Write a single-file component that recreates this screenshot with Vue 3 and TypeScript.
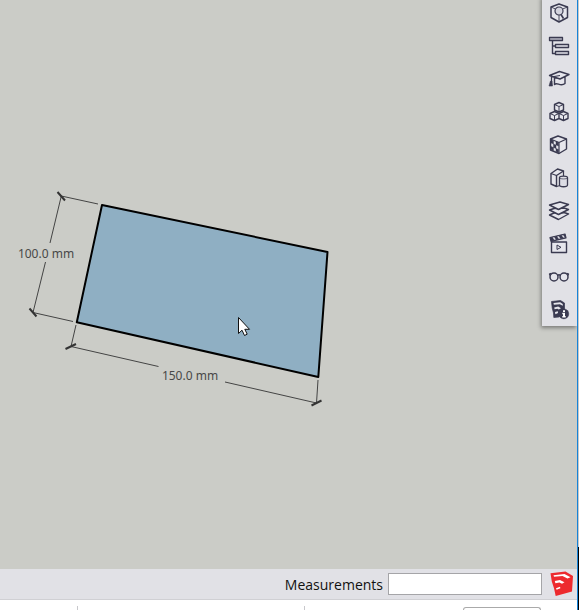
<script setup lang="ts">
import { ref } from 'vue'

interface Shape {
  d: string
  fill?: string
  width?: number
}

interface Tool {
  name: string
  shapes: Shape[]
}

const ink = '#3a3a50'
const pale = '#e6e6ec'
const measurement = ref('')

// Icon paths share a 22 x 22 grid.
const tools: Tool[] = [
  {
    name: 'Entity Info',
    shapes: [
      { d: 'M11 2 19.5 5V15.5L11 20 3 15.5V5Z', fill: pale, width: 1.5 },
      { d: 'M3 5 7.5 7M19.5 5 14.5 7M11 13V20', width: 0.9 },
      { d: 'M11 5A4 4 0 1 1 11 13A4 4 0 1 1 11 5Z', fill: '#d4d4de', width: 1.2 },
      { d: 'M13 12.5 15.5 16.5', width: 1.6 },
    ],
  },
  {
    name: 'Outliner',
    shapes: [
      { d: 'M1.5 2.5H14.5V5.5H1.5Z', fill: '#b9b9c5', width: 1.3 },
      { d: 'M4.5 6V18.5H8M4.5 11H8', width: 1.4 },
      { d: 'M7.5 9.5H20.5V12.5H7.5ZM7.5 16.5H20.5V19.5H7.5Z', fill: pale, width: 1.4 },
    ],
  },
  {
    name: 'Instructor',
    shapes: [
      { d: 'M6.5 10V16.5C9 13.5 12.5 19.5 17 15.5V9Z', fill: pale, width: 1.4 },
      { d: 'M1.5 7.5 11.5 3.5 21 6.5 12 11Z', fill: pale, width: 1.4 },
      { d: 'M12 7.5 3.5 9V14', width: 1.2 },
      { d: 'M2.5 13 1 18H4.5L4 13Z', fill: ink, width: 0.6 },
    ],
  },
  {
    name: 'Components',
    shapes: [
      { d: 'M11 1.5 15.5 3.5V9L11 11 6.5 9V3.5Z', fill: pale, width: 1.4 },
      { d: 'M6.5 10.5 11 12.5V17.5L6.5 19.5 2 17.5V12.5ZM15.5 10.5 20 12.5V17.5L15.5 19.5 11 17.5V12.5Z', fill: pale, width: 1.4 },
      { d: 'M6.5 3.5 11 5.5 15.5 3.5M11 5.5V11M2 12.5 6.5 14.5 11 12.5 15.5 14.5 20 12.5M6.5 14.5V19.5M15.5 14.5V19.5', width: 1 },
    ],
  },
  {
    name: 'Materials',
    shapes: [
      { d: 'M2.5 5 10 2 18.5 5V15L11 19.5 2.5 16Z', fill: pale, width: 1.4 },
      { d: 'M2.5 5 11 8.5 18.5 5M11 8.5V19.5', width: 1.2 },
      { d: 'M3 5.5 5.5 6.5V10L3 9ZM8 7.5 10.5 8.5V12L8 11ZM5.5 10 8 11V14.5L5.5 13.5ZM3 12.5 5.5 13.5V16.5L3 15.5ZM8 14.5 10.5 15.5V18.5L8 17.5Z', fill: ink, width: 0.4 },
    ],
  },
  {
    name: 'Styles',
    shapes: [
      { d: 'M3 6.5 9.5 2 15.5 4 8.5 8.5V19.5L3 17Z', fill: pale, width: 1.4 },
      { d: 'M3 6.5 8.5 8.5M15.5 4V9M8.5 19.5 12 18.5', width: 1.2 },
      { d: 'M11.5 10.8C11.5 8.5 19.5 8.5 19.5 10.8V18C19.5 20.3 11.5 20.3 11.5 18Z', fill: '#dcdce4', width: 1.3 },
      { d: 'M11.5 10.8C11.5 12.3 19.5 12.3 19.5 10.8', width: 0.7 },
    ],
  },
  {
    name: 'Tags',
    shapes: [
      { d: 'M1.5 15 6 13 16 12.5 20.5 14 10.5 19.5Z', fill: pale, width: 1.4 },
      { d: 'M1.5 10 6 8.5 16 8 20.5 9.5 10.5 14.5Z', fill: pale, width: 1.4 },
      { d: 'M1.5 5 12 2 20.5 4.5 10.5 9.5Z', fill: pale, width: 1.4 },
    ],
  },
  {
    name: 'Scenes',
    shapes: [
      { d: 'M3.5 9H18.5V19.5H3.5Z', fill: pale, width: 1.4 },
      { d: 'M2 4.5 17 1 18 4.8 3 8.3Z', fill: ink },
      { d: 'M4.5 4.5 6.2 4.1 8 6.5 6.3 6.9ZM9 3.5 10.7 3.1 12.5 5.5 10.8 5.9ZM13.5 2.4 15.2 2 17 4.4 15.3 4.8Z', fill: '#e2e2e9', width: 0.2 },
      { d: 'M9 12 13 14.3 9 16.5Z', fill: pale, width: 1 },
    ],
  },
  {
    name: 'Display',
    shapes: [
      { d: 'M6 7A4 4 0 1 1 6 15A4 4 0 1 1 6 7ZM16 7A4 4 0 1 1 16 15A4 4 0 1 1 16 7Z', fill: pale, width: 1.5 },
      { d: 'M9.5 9.5Q11 8 12.5 9.5M2 9.5 1.5 8 3.5 7.5M20 9.5 20.5 8 18.5 7.5', width: 1.3 },
    ],
  },
  {
    name: 'Model Info',
    shapes: [
      { d: 'M3.5 2.5 12.5 1.5 16.5 4V14L11 18 5.8 18.5 5.5 14 4.2 9Z', fill: ink, width: 0.7 },
      { d: 'M5.5 4 12.2 3.2 14.8 5V6.8L11.8 5.2 5.8 5.8ZM6.2 8.4 10.2 7.6 13 9.2 10.8 10.4 9.4 9.8 6.6 10.2ZM7 13 9.8 12.2 10 14 7.4 15.2Z', fill: pale, width: 0 },
      { d: 'M15.8 9.9A5 5 0 1 1 15.8 19.9A5 5 0 1 1 15.8 9.9Z', fill: ink, width: 0.4 },
      { d: 'M15 11.2H17V13H15ZM14.3 13.8H17V17H17.7V18.4H14.3V17H15V15.2H14.3Z', fill: '#ffffff', width: 0 },
    ],
  },
]
</script>

<template>
  <div class="app">
    <div class="window">
      <main class="viewport">
        <svg class="model" width="400" height="440" viewBox="0 0 400 440" role="img" aria-label="Rectangle, 150 by 100 mm">
          <polygon class="face" points="102,205 327.5,252 318.3,377 76.8,322.3" />
          <path
            class="dimension"
            d="M98 204 61.3 196 50 243M45.5 262 33 312.5 73 321.5M76 325 71 346.5 158.5 366.5M225 382 316.5 403 318 380"
          />
          <path class="tick" d="M57.5 192 65 200.5M29.5 308.5 36.5 316.5M65.5 349 76 344M311.5 405.5 321.5 400.5" />
          <text x="46" y="258">100.0 mm</text>
          <text x="190" y="380">150.0 mm</text>
          <path class="cursor" d="M238.5 317.5V333.5L242 330.2 244.5 335.5 247.2 334.2 244.8 329.3H249.5Z" />
        </svg>
        <nav class="tray" aria-label="Panels">
          <button v-for="tool in tools" :key="tool.name" type="button" class="tool" :aria-label="tool.name">
            <svg width="22" height="22" viewBox="0 0 22 22" aria-hidden="true">
              <path
                v-for="(shape, i) in tool.shapes"
                :key="i"
                :d="shape.d"
                :fill="shape.fill ?? 'none'"
                :stroke="ink"
                :stroke-width="shape.width ?? 1.2"
                stroke-linejoin="round"
              />
            </svg>
          </button>
        </nav>
      </main>
      <footer class="status">
        <label for="measurement">Measurements</label>
        <input id="measurement" v-model="measurement" type="text" autocomplete="off" />
        <svg class="logo" width="24" height="26" viewBox="0 0 24 26" aria-hidden="true">
          <path fill="#ed2a2e" d="M0.5 2.3 15.5 0.5 23 5 22 20.5 5.7 25 4 17.3 1.8 10.5Z" />
          <path
            fill="#fff"
            d="M3.5 4.2 14.5 2.9 20.5 6.2 17.5 7.4 12.5 4.9 4 5.8ZM4.8 10 10 8.9 14.5 11.2 12 12.8 9.4 11.5 5.4 12.2ZM6 17.2 10 15.8 10.4 17.3 6.6 18.8Z"
          />
        </svg>
      </footer>
      <div class="below">
        <span class="divider"></span>
        <span class="divider"></span>
        <span class="field"></span>
      </div>
    </div>
    <div class="desktop"></div>
  </div>
</template>

<style>
body {
  margin: 0;
}
</style>

<style scoped>
.app {
  display: flex;
  min-height: 100vh;
  font-family: "Open Sans", "Noto Sans", sans-serif;
}
.window {
  display: flex;
  flex: 1;
  flex-direction: column;
  min-width: 0;
  border-right: 1px solid #1683d8;
}
.viewport {
  position: relative;
  display: flex;
  flex: 1;
  align-items: flex-start;
  justify-content: flex-end;
  overflow: hidden;
  background: #cbccc7;
}
.model {
  position: absolute;
  top: 0;
  left: 0;
}
.face {
  fill: #8fafc3;
  stroke: #000;
  stroke-width: 2;
  stroke-linejoin: round;
}
.dimension {
  fill: none;
  stroke: #444;
  stroke-width: 1;
}
.tick {
  fill: none;
  stroke: #333;
  stroke-width: 2;
}
.model text {
  fill: #484848;
  font-family: "Noto Sans", "Open Sans", sans-serif;
  font-size: 12px;
  text-anchor: middle;
}
.cursor {
  fill: #fff;
  stroke: #111;
  stroke-width: 1;
}
.tray {
  display: flex;
  flex-direction: column;
  box-sizing: border-box;
  width: 35px;
  margin-top: -4px;
  padding-right: 1px;
  background: #e1e1e6;
  box-shadow: -1px 2px 4px rgba(0, 0, 0, 0.4);
}
.tool {
  display: flex;
  align-items: center;
  justify-content: center;
  height: 33px;
  padding: 0;
  border: 0;
  background: none;
}
.status {
  display: flex;
  align-items: center;
  justify-content: flex-end;
  gap: 5px;
  box-sizing: border-box;
  height: 31px;
  padding-right: 3px;
  border-bottom: 1px solid #d0d0d4;
  background: #e1e1e6;
  color: #111;
  font-size: 14px;
}
.status input {
  box-sizing: border-box;
  width: 154px;
  height: 22px;
  padding: 0 4px;
  border: 1px solid #a5a5a8;
  background: #fff;
  font: inherit;
}
.logo {
  margin-left: 3px;
}
.below {
  display: flex;
  align-items: flex-end;
  height: 10px;
  overflow: hidden;
  background: #fff;
}
.divider {
  box-sizing: border-box;
  flex: 0 0 auto;
  width: 78px;
  height: 4px;
  border-right: 1px solid #c8c8cc;
}
.divider + .divider {
  width: 227px;
}
.field {
  box-sizing: border-box;
  width: 78px;
  height: 3px;
  margin: 0 36px 0 auto;
  border: 1px solid #aaa;
  border-bottom: 0;
  border-radius: 4px 4px 0 0;
}
.desktop {
  width: 1px;
  background: linear-gradient(#c8c8c8 547px, #000 547px);
}
</style>
